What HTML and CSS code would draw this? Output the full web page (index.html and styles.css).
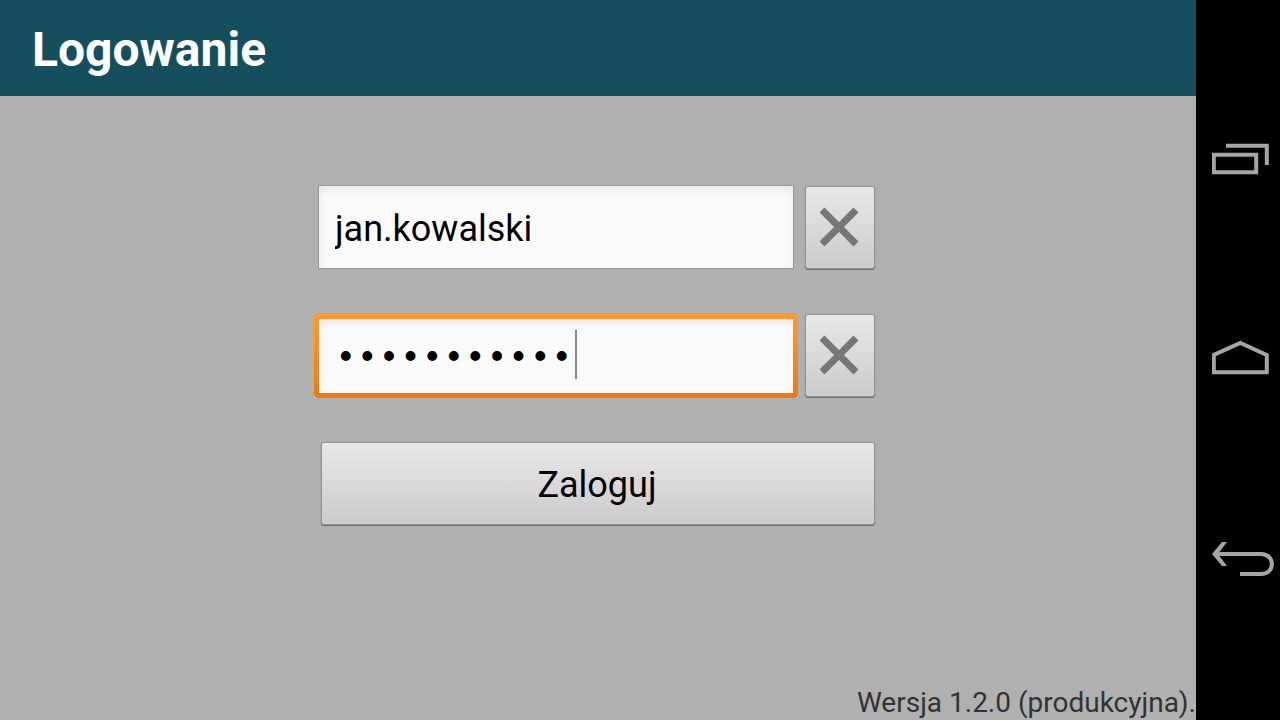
FILE: index.html
```html
<!DOCTYPE html>
<html lang="pl">
<head>
  <meta charset="UTF-8">
  <meta name="viewport" content="width=device-width, initial-scale=1.0">
  <title>Logowanie</title>
  <link rel="stylesheet" href="styles.css">
</head>
<body>
  <div class="app">
    <header class="action-bar">
      <h1>Logowanie</h1>
    </header>

    <main>
      <form class="login-form">
        <div class="row">
          <input class="field" type="text" name="login" value="jan.kowalski" aria-label="Login">
          <button class="btn btn-clear" type="button" aria-label="Wyczyść login">
            <svg width="40" height="40" viewBox="0 0 40 40"><path d="M2 3L36 37M36 3L2 37"/></svg>
          </button>
        </div>
        <div class="row">
          <div class="password">
            <input class="field" type="password" name="password" value="haslo123456" aria-label="Hasło">
            <span class="caret"></span>
          </div>
          <button class="btn btn-clear" type="button" aria-label="Wyczyść hasło">
            <svg width="40" height="40" viewBox="0 0 40 40"><path d="M2 3L36 37M36 3L2 37"/></svg>
          </button>
        </div>
        <button class="btn btn-submit" type="submit">Zaloguj</button>
      </form>
    </main>

    <footer>Wersja 1.2.0 (produkcyjna).</footer>
  </div>

  <nav class="nav-bar">
    <button type="button" aria-label="Ostatnie aplikacje">
      <svg width="64" height="40" viewBox="0 0 64 40"><path d="M1.8 14.8H44.2V32.2H1.8ZM14 5.8H54.8V25"/></svg>
    </button>
    <button type="button" aria-label="Ekran główny">
      <svg width="64" height="40" viewBox="0 0 64 40"><path d="M1.8 32.2V15L28.3 3L54.8 15V32.2Z"/></svg>
    </button>
    <button type="button" aria-label="Wstecz">
      <svg width="64" height="40" viewBox="0 0 64 40"><path d="M2.5 14H49C63.500 14 63.500 34 49 34H28"/><path d="M10 2H15L6 14L15 26H10L0 14Z" class="arrow-head"/></svg>
    </button>
  </nav>
</body>
</html>
```
FILE: styles.css
```css
:root {
  --bar: #154f5d;
  --background: #b0b0b0;
  --icon: #a5a5a5;
}

* {
  box-sizing: border-box;
}

body {
  margin: 0;
  min-height: 100vh;
  display: flex;
  background: var(--background);
  color: #000;
  font-family: Roboto, sans-serif;
}

.app {
  flex: 1;
  display: flex;
  flex-direction: column;
}

.action-bar {
  height: 96px;
  padding: 2px 32px 0;
  display: flex;
  align-items: center;
  background: var(--bar);
}

h1 {
  margin: 0;
  color: #fff;
  font-size: 48px;
  font-weight: 700;
}

main {
  flex: 1;
  padding: 89px 16px 16px;
}

.login-form {
  max-width: 560px;
  margin: 0 auto;
  display: flex;
  flex-direction: column;
  gap: 44px;
}

.row {
  display: flex;
  align-items: center;
  gap: 12px;
  padding-right: 4px;
}

.row > .field,
.password {
  flex: 1;
  min-width: 0;
}

.field {
  display: block;
  width: 100%;
  height: 84px;
  padding: 4px 16px 0;
  border: 1px solid #999;
  border-radius: 0;
  background: #fbfbfb;
  box-shadow: inset 0 6px 8px -2px #e8e8e8, inset 3px 0 8px -2px #f0f0f0;
  color: #000;
  font-family: inherit;
  font-size: 36px;
  outline: none;
}

.password {
  position: relative;
}

/* orange focus frame, drawn around the field */
.password::before {
  content: "";
  position: absolute;
  inset: 0 -4px -1px;
  border-radius: 5px;
  background: linear-gradient(#ff9a2e, #f07a0a);
}

.password .field {
  position: relative;
  border-color: transparent;
  border-width: 6px 1px 4px;
  background-clip: padding-box;
  font-family: "Liberation Mono", monospace;
}

.caret {
  position: absolute;
  left: 257px;
  top: 17px;
  width: 2px;
  height: 49px;
  background: #888;
}

.btn {
  border: none;
  border-radius: 2px;
  background: linear-gradient(#e8e8e8, #cbcbcb);
  box-shadow: 0 0 1px 1px #999, 0 1px 1px 1px #666;
  color: #000;
  font-family: inherit;
  font-size: 36px;
}

.btn-clear {
  width: 68px;
  height: 81px;
  padding: 0;
  display: flex;
  align-items: center;
  justify-content: center;
}

.btn-clear svg {
  fill: none;
  stroke: #777;
  stroke-width: 7;
}

.btn-submit {
  height: 81px;
  margin: 2px 4px 0;
  padding: 2px 2px 0 0;
}

footer {
  text-align: right;
  color: #333;
  font-size: 28px;
  line-height: 34px;
}

.nav-bar {
  width: 84px;
  padding: 60px 0;
  display: flex;
  flex-direction: column;
  justify-content: space-around;
  background: #000;
}

.nav-bar button {
  padding: 0 0 0 16px;
  border: none;
  background: none;
  text-align: left;
}

.nav-bar svg {
  display: block;
  fill: none;
  stroke: var(--icon);
  stroke-width: 4;
}

.nav-bar .arrow-head {
  fill: var(--icon);
  stroke: none;
}
```
